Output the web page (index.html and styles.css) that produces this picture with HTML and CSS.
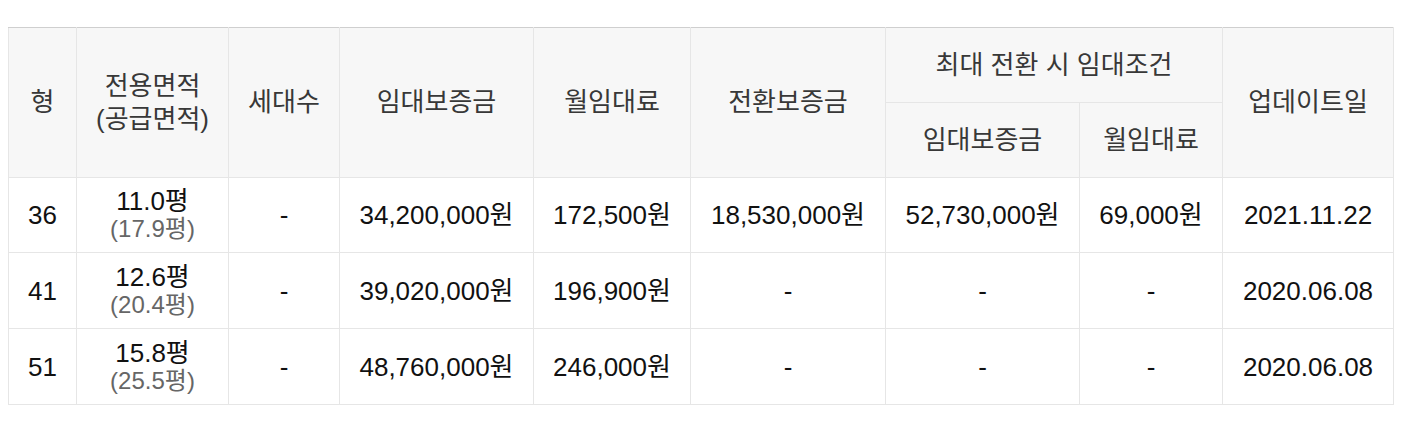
FILE: index.html
```html
<!DOCTYPE html>
<html lang="ko">
<head>
<meta charset="utf-8">
<title>임대조건</title>
<link rel="stylesheet" href="styles.css">
</head>
<body>
<div class="wrap">
<table class="rent">
<colgroup>
<col class="c1"><col class="c2"><col class="c3"><col class="c4"><col class="c5"><col class="c6"><col class="c7"><col class="c8"><col class="c9">
</colgroup>
<thead>
<tr class="hrow">
<th rowspan="2">형</th>
<th rowspan="2">전용면적<br>(공급면적)</th>
<th rowspan="2">세대수</th>
<th rowspan="2">임대보증금</th>
<th rowspan="2">월임대료</th>
<th rowspan="2">전환보증금</th>
<th colspan="2">최대 전환 시 임대조건</th>
<th rowspan="2">업데이트일</th>
</tr>
<tr class="hrow">
<th>임대보증금</th>
<th>월임대료</th>
</tr>
</thead>
<tbody>
<tr class="first">
<td>36</td>
<td><div class="area">11.0평</div><div class="sub">(17.9평)</div></td>
<td>-</td>
<td>34,200,000원</td>
<td>172,500원</td>
<td>18,530,000원</td>
<td>52,730,000원</td>
<td>69,000원</td>
<td>2021.11.22</td>
</tr>
<tr>
<td>41</td>
<td><div class="area">12.6평</div><div class="sub">(20.4평)</div></td>
<td>-</td>
<td>39,020,000원</td>
<td>196,900원</td>
<td>-</td>
<td>-</td>
<td>-</td>
<td>2020.06.08</td>
</tr>
<tr>
<td>51</td>
<td><div class="area">15.8평</div><div class="sub">(25.5평)</div></td>
<td>-</td>
<td>48,760,000원</td>
<td>246,000원</td>
<td>-</td>
<td>-</td>
<td>-</td>
<td>2020.06.08</td>
</tr>
</tbody>
</table>
</div>
</body>
</html>
```

FILE: styles.css
```css
html, body {
  margin: 0;
  padding: 0;
  background: #fff;
}
.wrap {
  padding: 27px 0 0 8px;
}
.rent {
  border-collapse: collapse;
  table-layout: fixed;
  width: 1385px;
  font-family: "Liberation Sans", "Noto Sans CJK KR", sans-serif;
  font-size: 26px;
  border-top: 1px solid #cfcfcf;
}
.c1 { width: 68px; }
.c2 { width: 152px; }
.c3 { width: 111px; }
.c4 { width: 194px; }
.c5 { width: 157px; }
.c6 { width: 195px; }
.c7 { width: 194px; }
.c8 { width: 143px; }
.c9 { width: 171px; }
.rent th, .rent td {
  border: 1px solid #e6e6e6;
  text-align: center;
  vertical-align: middle;
  padding: 0;
}
.rent thead tr:first-child th {
  border-top: 1px solid #cfcfcf;
}
.rent th {
  background: #f7f7f7;
  color: #383838;
  font-weight: normal;
  line-height: 33px;
  height: 74px;
}
.rent td {
  color: #111;
  height: 75px;
  line-height: 28px;
}
.rent .first td {
  height: 74px;
}
.area {
  line-height: 28px;
}
.sub {
  color: #666;
  font-size: 24px;
  line-height: 28px;
}
```
